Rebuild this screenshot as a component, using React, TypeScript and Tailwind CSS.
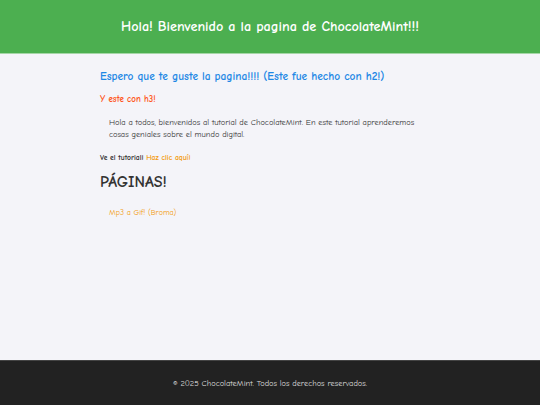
export default function App() {
  return (
    <div
      className="flex min-h-[405px] flex-col bg-[#f4f4f9] text-[#333]"
      style={{ fontFamily: '"Comic Sans MS", "Comic Neue", "DejaVu Sans", sans-serif' }}
    >
      <header className="flex h-[54px] items-center justify-center border-b border-[#a5d6a7] bg-[#4caf50]">
        <h1 className="text-[14.2px] font-bold text-white">Hola! Bienvenido a la pagina de ChocolateMint!!!</h1>
      </header>

      <main className="flex-1">
        <div className="mx-auto w-[340px] pt-[15px]">
          <h2 className="text-[11.4px] font-bold leading-[16px] text-[#1e88e5]">
            Espero que te guste la pagina!!!! (Este fue hecho con h2!)
          </h2>
          <h3 className="mt-[8px] text-[9px] font-bold leading-[12px] text-[#ff5722]">Y este con h3!</h3>
          <p className="mt-[11px] pl-[9px] pr-[14px] text-[8.4px] leading-[12px]">
            Hola a todos, bienvenidos al tutorial de ChocolateMint. En este tutorial aprenderemos cosas geniales sobre
            el mundo digital.
          </p>
          <p className="mt-[13px] text-[7.6px] font-bold leading-[10px]">
            Ve el tutorial! <a className="text-[#f39c12]">Haz clic aquí!</a>
          </p>
          <h2 className="mt-[9px] text-[16px] font-bold leading-[20px]">PÁGINAS!</h2>
          <ul className="mt-[12px] pl-[9px]">
            <li className="leading-[12px]">
              <a className="text-[8px] text-[#f39c12]">Mp3 a Gif! (Broma)</a>
            </li>
          </ul>
        </div>
      </main>

      <footer className="flex h-[45px] items-center justify-center border-t border-[#444] bg-[#222]">
        <p className="text-[8.4px] text-[#ddd]">© 2025 ChocolateMint. Todos los derechos reservados.</p>
      </footer>
    </div>
  );
}
